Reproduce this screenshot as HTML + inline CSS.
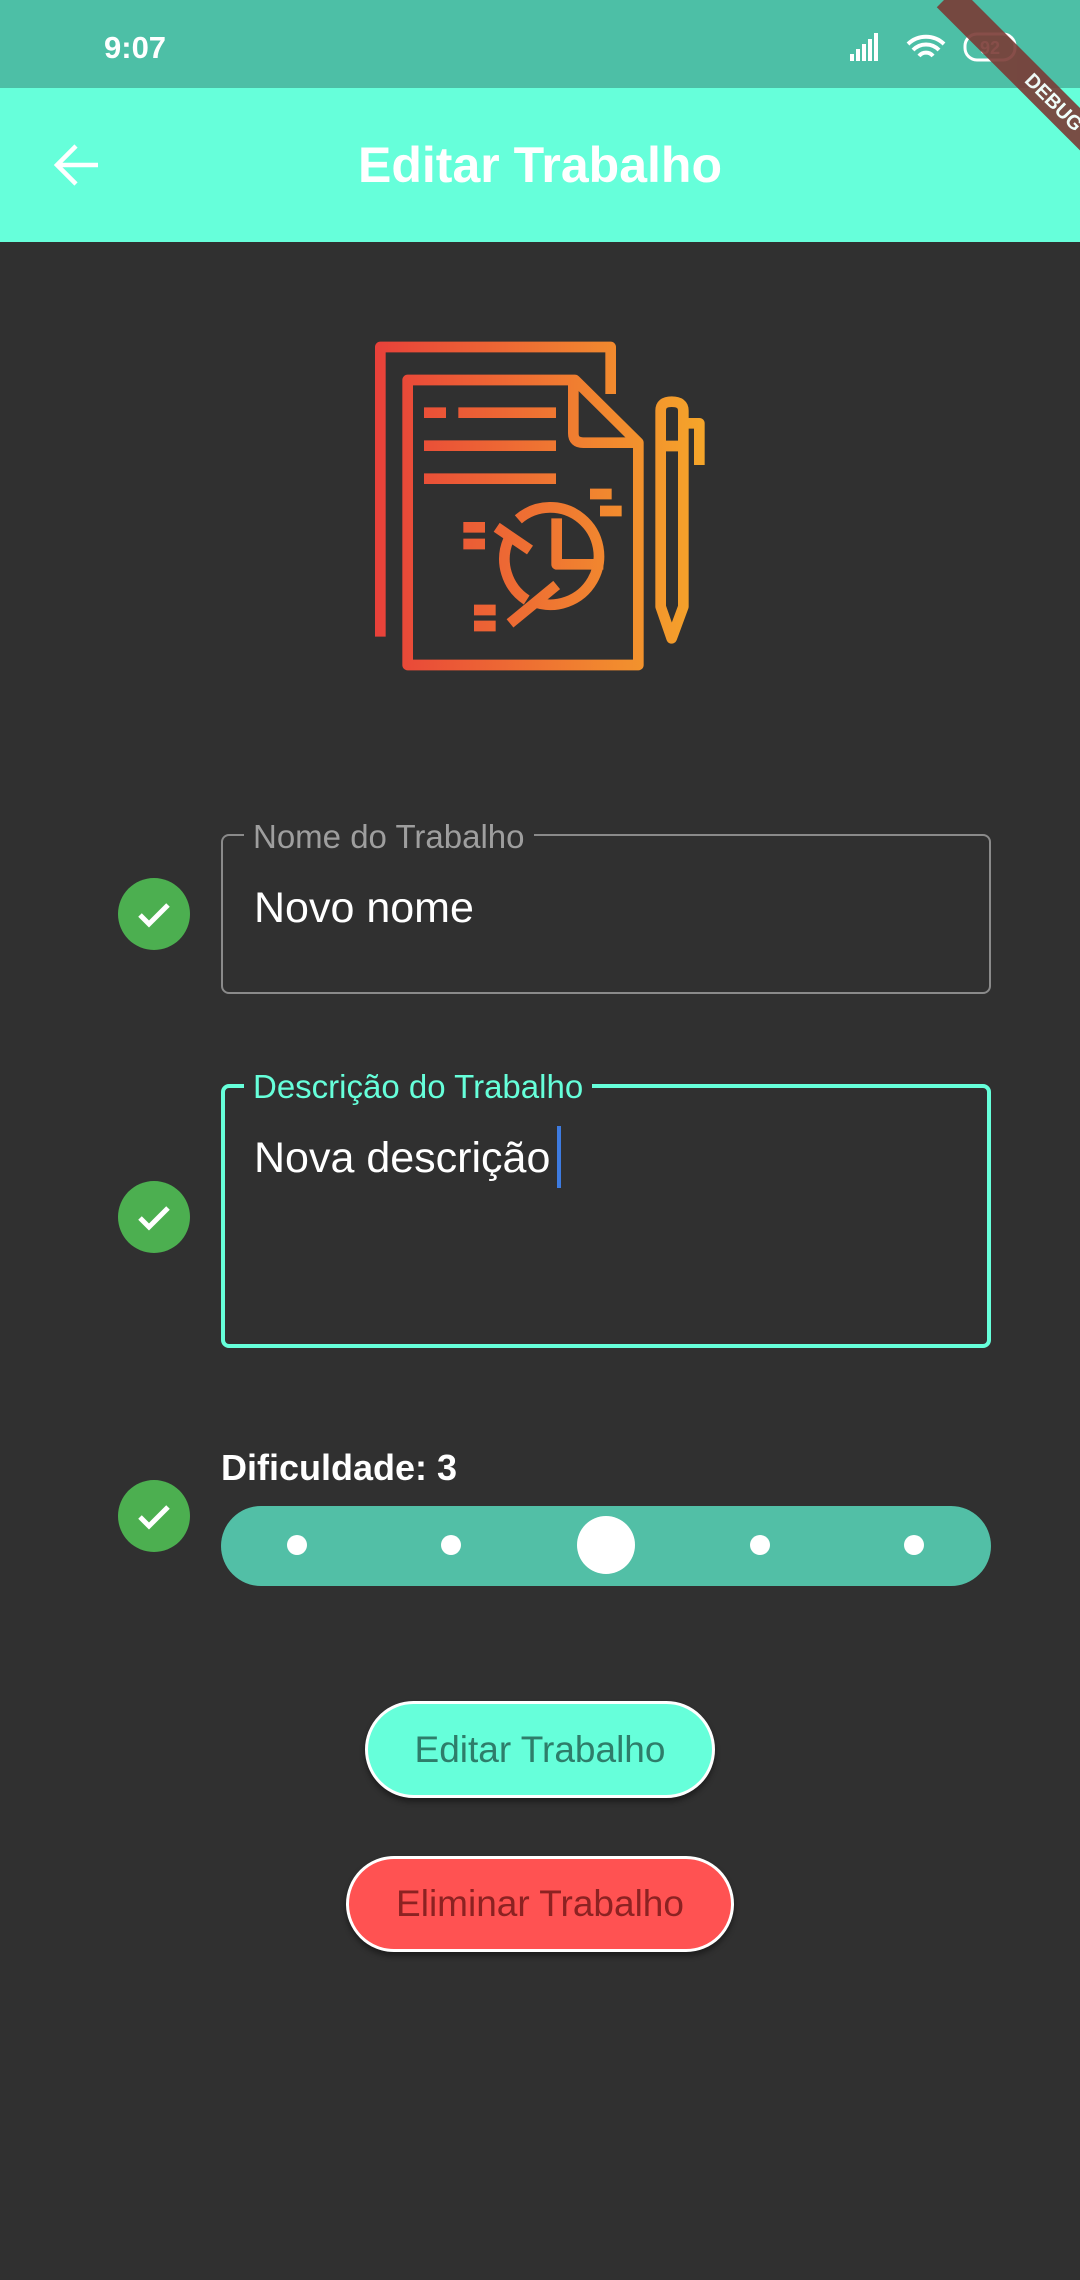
<!DOCTYPE html>
<html><head><meta charset="utf-8"><style>
*{margin:0;padding:0;box-sizing:border-box}
body{width:1080px;height:2280px;background:#303030;position:relative;overflow:hidden;font-family:"Liberation Sans",sans-serif;}
.abs{position:absolute}
.chk{position:absolute;width:72px;height:72px;border-radius:50%;background:#4caf50;left:118px}
.chk svg{position:absolute;left:16px;top:16px}
.t{white-space:nowrap}
.dot{position:absolute;width:20px;height:20px;border-radius:50%;background:#fff;top:1535px}
</style></head><body>
<div class="abs" style="left:0;top:0;width:1080px;height:88px;background:#4dbfa6"></div>
<div class="abs t" style="left:104px;top:30px;font-size:31px;font-weight:bold;color:#fff">9:07</div>
<svg class="abs" style="left:848px;top:30px" width="190" height="36" viewBox="0 0 190 36">
<g fill="#fff"><rect x="2" y="24" width="4" height="7"/><rect x="8" y="19" width="4" height="12"/><rect x="14" y="14" width="4" height="17"/><rect x="20" y="9" width="4" height="22"/><rect x="26" y="3" width="4" height="28"/></g>
<path d="M60 14a26 26 0 0 1 36 0M65 20a18 18 0 0 1 26 0M71 26a9 9 0 0 1 14 0" stroke="#fff" stroke-width="4" fill="none"/>
<rect x="117" y="4" width="50" height="26" rx="12" stroke="#fff" stroke-width="3" fill="none"/>
<text x="142" y="24" font-size="18" font-weight="bold" fill="#fff" text-anchor="middle" font-family="Liberation Sans">92</text>
</svg>
<div class="abs" style="left:0;top:88px;width:1080px;height:154px;background:#66ffda"></div>
<svg class="abs" style="left:52px;top:142px" width="50" height="46" viewBox="0 0 50 46"><path d="M46 23H6M24 4L5 23l19 19" stroke="#fff" stroke-width="4.5" fill="none"/></svg>
<div class="abs t" style="left:0;width:1080px;text-align:center;top:136px;font-size:50px;font-weight:bold;color:#fff">Editar Trabalho</div>
<div class="abs" style="width:300px;height:30px;background:#7a3b35;transform:rotate(45deg);transform-origin:0 0;opacity:.9;color:#fff;font-size:20px;font-weight:bold;text-align:center;line-height:30px;left:958px;top:-14px">DEBUG</div>

<svg class="abs" style="left:340px;top:320px" width="400" height="380" viewBox="0 0 1200 1140">
<defs><linearGradient id="g" x1="100" y1="0" x2="1090" y2="0" gradientUnits="userSpaceOnUse"><stop offset="0" stop-color="#e8403a"/><stop offset="1" stop-color="#f5a52a"/></linearGradient></defs>
<g stroke="url(#g)" stroke-width="32" fill="none" stroke-linejoin="round">
<path d="M121 950V81H812V222"/>
<path d="M203 180H705L895 368V1035H203Z"/>
<path d="M700 190V340Q700 368 730 368H890"/>
<path d="M252 278H318M355 278H648M252 377H648M252 476H648"/>
<path d="M750 522H815M780 573H845M370 622H435M370 672H435M402 870H467M402 918H467"/>
<path d="M535 598A146 146 0 1 1 580 845"/>
<path d="M505 660A146 146 0 0 0 560 840"/>
<path d="M650 595V733H790"/>
<path d="M470 622L570 690M650 795L510 910"/>
<path d="M962 860V272Q962 245 995 245Q1030 245 1030 272V860L995 955Z"/>
<path d="M962 378H1030M1030 310H1078V435"/>
</g></svg>

<div class="chk" style="top:878px"><svg width="40" height="40" viewBox="0 0 40 40"><path d="M6 21l9 9L34 11" stroke="#fff" stroke-width="5" fill="none"/></svg></div>
<div class="abs" style="left:221px;top:834px;width:770px;height:160px;border:2px solid #8a8a8a;border-radius:8px"></div>
<div class="abs t" style="left:244px;top:818px;padding:0 9px;background:#303030;font-size:33px;color:#9e9e9e">Nome do Trabalho</div>
<div class="abs t" style="left:254px;top:884px;font-size:43px;color:#fff">Novo nome</div>

<div class="chk" style="top:1181px"><svg width="40" height="40" viewBox="0 0 40 40"><path d="M6 21l9 9L34 11" stroke="#fff" stroke-width="5" fill="none"/></svg></div>
<div class="abs" style="left:221px;top:1084px;width:770px;height:264px;border:4px solid #66ffda;border-radius:8px"></div>
<div class="abs t" style="left:244px;top:1068px;padding:0 9px;background:#303030;font-size:33px;color:#66ffda">Descrição do Trabalho</div>
<div class="abs t" style="left:254px;top:1134px;font-size:43px;color:#fff">Nova descrição</div>
<div class="abs" style="left:557px;top:1126px;width:4px;height:62px;background:#3d7be0"></div>

<div class="chk" style="top:1480px"><svg width="40" height="40" viewBox="0 0 40 40"><path d="M6 21l9 9L34 11" stroke="#fff" stroke-width="5" fill="none"/></svg></div>
<div class="abs t" style="left:221px;top:1447px;font-size:36px;font-weight:bold;color:#fff">Dificuldade: 3</div>
<div class="abs" style="left:221px;top:1506px;width:770px;height:80px;border-radius:40px;background:#52bfa6"></div>
<div class="dot" style="left:287px"></div><div class="dot" style="left:441px"></div>
<div class="dot" style="left:750px"></div><div class="dot" style="left:904px"></div>
<div class="abs" style="left:577px;top:1516px;width:58px;height:58px;border-radius:50%;background:#fff"></div>

<div class="abs t" style="left:365px;top:1701px;width:350px;height:97px;border-radius:49px;background:#66ffda;border:3px solid #fff;box-shadow:0 4px 6px rgba(0,0,0,.4);text-align:center;line-height:91px;font-size:37px;color:#2e7d6a">Editar Trabalho</div>
<div class="abs t" style="left:346px;top:1856px;width:388px;height:96px;border-radius:48px;background:#ff5252;border:3px solid #fff;box-shadow:0 4px 6px rgba(0,0,0,.4);text-align:center;line-height:90px;font-size:37px;color:#8c2222">Eliminar Trabalho</div>
</body></html>
